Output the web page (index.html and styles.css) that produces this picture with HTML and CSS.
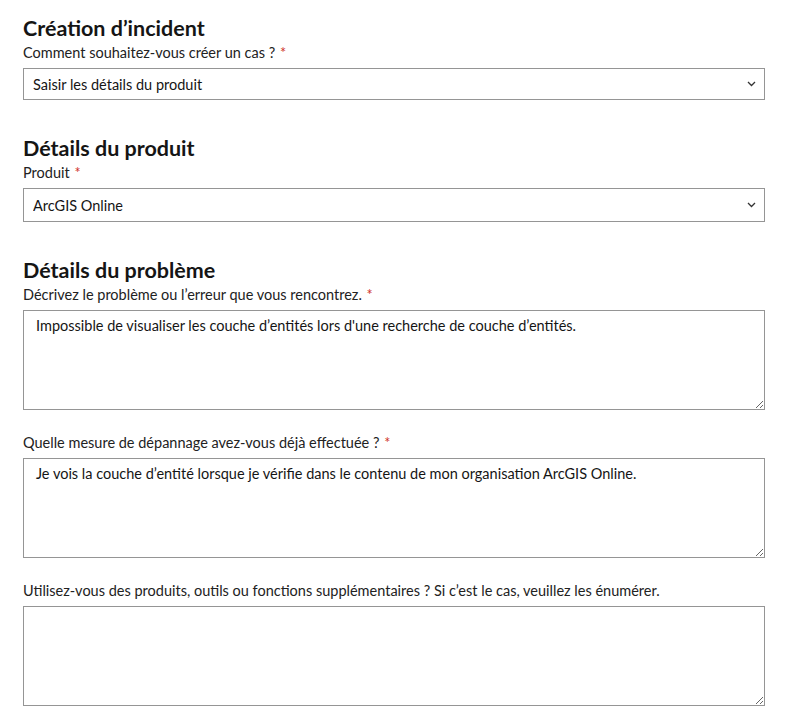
FILE: index.html
```html
<!DOCTYPE html>
<html lang="fr">
<head>
    <meta charset="UTF-8">
    <meta name="viewport" content="width=device-width, initial-scale=1.0">
    <title>Création d'incident</title>
    <link rel="stylesheet" href="styles.css">
</head>
<body>

    <form class="case-form">
        <section class="block">
            <h2>Création d’incident</h2>
            <label class="field-label" for="mode">Comment souhaitez-vous créer un cas ? <span class="req">*</span></label>
            <div class="select-wrap">
                <select id="mode">
                    <option>Saisir les détails du produit</option>
                </select>
                <svg class="chevron" width="9" height="6" viewBox="0 0 9 6"><path d="M1 1l3.5 3.5L8 1" fill="none" stroke="#333" stroke-width="1.3"/></svg>
            </div>
        </section>

        <section class="block">
            <h2>Détails du produit</h2>
            <label class="field-label" for="product">Produit <span class="req">*</span></label>
            <div class="select-wrap">
                <select id="product">
                    <option>ArcGIS Online</option>
                </select>
                <svg class="chevron" width="9" height="6" viewBox="0 0 9 6"><path d="M1 1l3.5 3.5L8 1" fill="none" stroke="#333" stroke-width="1.3"/></svg>
            </div>
        </section>

        <section class="block">
            <h2>Détails du problème</h2>
            <label class="field-label" for="issue">Décrivez le problème ou l’erreur que vous rencontrez. <span class="req">*</span></label>
            <textarea id="issue">Impossible de visualiser les couche d’entités lors d'une recherche de couche d’entités.</textarea>

            <label class="field-label spaced" for="steps">Quelle mesure de dépannage avez-vous déjà effectuée ? <span class="req">*</span></label>
            <textarea id="steps">Je vois la couche d’entité lorsque je vérifie dans le contenu de mon organisation ArcGIS Online.</textarea>

            <label class="field-label spaced" for="extra">Utilisez-vous des produits, outils ou fonctions supplémentaires ? Si c’est le cas, veuillez les énumérer.</label>
            <textarea id="extra"></textarea>
        </section>
    </form>

</body>
</html>
```

FILE: styles.css
```css
body {
    margin: 0;
    background: #fff;
    color: #151515;
    font-family: Lato, "Noto Sans", sans-serif;
}

.case-form {
    padding: 16px 31px 0 23px;
}

.block {
    margin-bottom: 36px;
}

h2 {
    margin: 0;
    font-size: 21.5px;
    font-weight: 700;
    line-height: 24px;
}

.field-label {
    display: block;
    font-size: 14.5px;
    line-height: 20px;
    margin: 3px 0 5px;
    color: #222;
}

.field-label.spaced {
    margin-top: 23px;
}

.req {
    color: #d0342c;
    margin-left: 1px;
}

.select-wrap {
    position: relative;
}

select,
textarea {
    display: block;
    box-sizing: border-box;
    width: 100%;
    border: 1px solid #959595;
    background: #fff;
    color: #151515;
    font-family: inherit;
    font-size: 14.5px;
    border-radius: 0;
    outline: none;
}

select {
    appearance: none;
    height: 32px;
    padding: 0 30px 0 9px;
}

#product {
    height: 34px;
}

.chevron {
    position: absolute;
    right: 9px;
    top: 50%;
    margin-top: -3px;
    pointer-events: none;
}

textarea {
    height: 100px;
    padding: 6px 12px;
    line-height: 18px;
    resize: vertical;
}
```
